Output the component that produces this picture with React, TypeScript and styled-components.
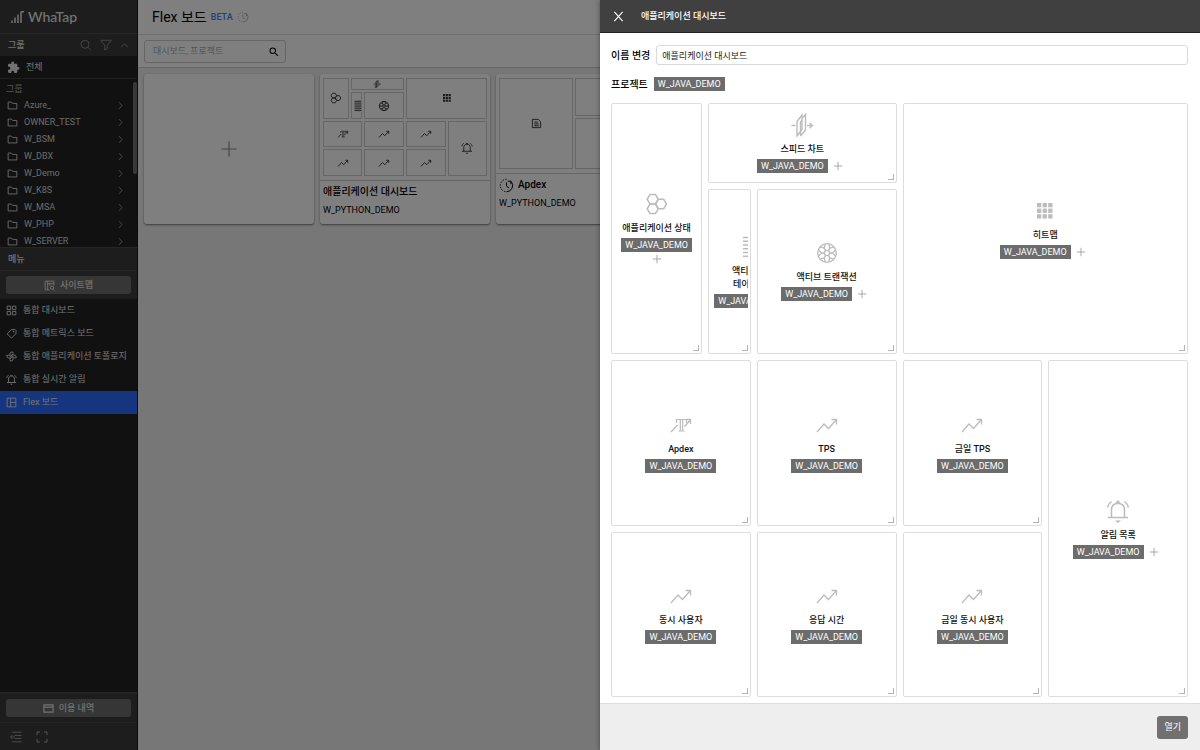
import React from "react";
import styled, { createGlobalStyle, css } from "styled-components";
import { MdExtension, MdSearch } from "react-icons/md";

const GlobalStyle = createGlobalStyle`
  *, *::before, *::after { box-sizing: border-box; }
  body {
    margin: 0;
    font-family: Roboto, "Noto Sans CJK KR", sans-serif;
    font-size: 9px;
    line-height: 13px;
    color: #000;
  }
  button, input { font: inherit; color: inherit; margin: 0; }
  button { cursor: pointer; border: 0; padding: 0; background: none; }
  h1, h2, h3, p, ul { margin: 0; padding: 0; font-size: inherit; font-weight: inherit; }
  ul { list-style: none; }
  a { color: inherit; text-decoration: none; }
  svg { display: block; flex: none; }
`;

/* ---------- icons ---------- */

type IconProps = { size?: number; width?: number };

const Line = styled.svg.attrs({ fill: "none", stroke: "currentColor", "aria-hidden": true })``;

const icon =
  (body: React.ReactNode, stroke = 1.5) =>
  ({ size = 24, width = stroke }: IconProps) => (
    <Line width={size} height={size} viewBox="0 0 24 24" strokeWidth={width}>
      {body}
    </Line>
  );

const TrendIcon = icon(<path d="M2 19 9 11l4.500 4.500L21 7M16.500 6.500H21.500V11.500" />, 1.3);
const ApdexIcon = icon(
  <>
    <path d="M2 19 8.500 12M15.500 13.500 21 7.500M17.500 6.500H21.500V11" />
    <path d="M7.500 10V6.500h10V10M11.300 6.500v11.500M13.700 6.500v11.500M9.500 18h6" strokeWidth={1.2} />
  </>,
  1.3,
);
const HexIcon = icon(
  <>
    <path d="M5 2.500h5.500L13.300 7.300 10.500 12H5L2.200 7.300z" />
    <path d="M5 12h5.500l2.800 4.800-2.800 4.700H5l-2.800-4.700z" />
    <path d="M13.300 7.300h5.400L21.500 12l-2.800 4.800h-5.400L10.500 12z" />
  </>,
);
const SpeedIcon = icon(
  <>
    <path d="M7 8.500 12 2v14.500L7 23z" />
    <path d="M10.500 22.500V9L12 7M10.500 23 15.500 17V1.500L12.500 5" />
    <path d="M1.500 12.500h4M17 12.500h4.500" />
    <path d="m19.500 9.800 2.800 2.700-2.800 2.700" />
  </>,
  1.4,
);
const TableIcon = icon(<path d="M5 2.500h14M5 6.200h14M5 10h14M5 13.800h14M5 17.500h14M5 21.200h14" />, 1.4);
const WheelIcon = icon(
  <>
    <circle cx="12" cy="12" r="9.300" />
    <circle cx="12" cy="12" r="2.600" />
    <path d="M9.400 12H6.500M14.600 12h2.900M10.700 9.700 9.200 7.200M13.300 9.700l1.500-2.500M10.700 14.300l-1.500 2.500M13.300 14.300l1.500 2.500" />
    <path d="M3.500 9 6.500 12l-3 3M20.500 9l-3 3 3 3M5.200 6l4 1.200 1-4.200M18.800 6l-4 1.200-1-4.200M5.200 18l4-1.200 1 4.200M18.800 18l-4-1.200-1 4.200" />
  </>,
  1.3,
);
const BellIcon = icon(
  <>
    <path d="M5.500 18.500V11c0-4 2.500-6.500 6.500-6.500s6.500 2.500 6.500 6.500v7.500M2 18.500h20M10 4.200 12 2l2 2.200M1.500 8.500C2 6 3.500 4 5.500 2.500M22.500 8.500C22 6 20.500 4 18.500 2.500" />
    <path d="M9 21.500h6L12 24z" fill="currentColor" stroke="none" />
  </>,
);
const HeatIcon = icon(
  <g fill="currentColor" stroke="none">
    {[4, 9.600, 15.200].map((y) =>
      [4, 9.600, 15.200].map((x) => <rect key={`${x}-${y}`} x={x} y={y} width="4.300" height="4.300" />),
    )}
  </g>,
);
const DocIcon = icon(<path d="M3 3h13l5 5v13H3zM7 9h8M7 13h10M7 17h10" />, 2);
const FolderIcon = icon(<path d="M2.500 4.500h7l2.500 3h9.500v12h-19z" />, 2);
const ChevronIcon = icon(<path d="m8 3 8 9-8 9" />, 1.6);
const UpIcon = icon(<path d="m3 16 9-8 9 8" />, 2);
const LensIcon = icon(<path d="M18 10.500a8 8 0 1 1-16 0 8 8 0 0 1 16 0zM16 16.500l6 6" />, 1.5);
const FunnelIcon = icon(<path d="M1.500 2.500h21l-8 10.500v6l-5 3v-9z" />, 1.5);
const PlusIcon = icon(<path d="M12 2v20M2 12h20" />);
const CloseIcon = icon(<path d="m3 2 18 20M21 2 3 22" />, 2.4);
const GridIcon = icon(<path d="M2.500 2.500H10V10H2.500zM14 2.500h7.500V10H14zM2.500 14H10v7.500H2.500zM14 14h7.500v7.500H14z" />, 2);
const TagIcon = icon(
  <>
    <path d="m2.500 13 9-9.500 8-.5 2.500 2.500-.5 7-9.500 9.500z" />
    <circle cx="16.500" cy="8" r="1" />
  </>,
  2,
);
const TopologyIcon = icon(
  <>
    <circle cx="12" cy="12" r="2" />
    <path d="M12 10 8 7.500 10 3l4.500-1 1 4zM14 12l2.500-4 4.500 2 1.500 4.500-4.500.5zM12 14l4 2.500L14 21l-4.500 1-1-4zM10 12l-2.500 4L3 14 1.500 9.500 6 9z" />
  </>,
  2,
);
const BoardIcon = icon(<path d="M2.500 2.500h19v19h-19zM10 2.500v19M10 12h11.500" />, 2);
const SitemapIcon = icon(
  <path d="M12 21.500H2.500v-19h19V12M8 2.500v19M8 8h13.500M13 8v5M21 17a3.500 3.500 0 1 1-7 0 3.500 3.500 0 0 1 7 0zM20 20l3 3" />,
  2,
);
const CardIcon = icon(<path d="M2 4h20v16H2zM2 9h20" />, 2.6);
const CollapseIcon = icon(<path d="M4 2.500h19M9 9h14M4 21.500h19M9 15h14M1 12h9M5 8l-4 4 4 4" />, 1.6);
const ExpandIcon = icon(<path d="M2 8V2h6M16 2h6v6M22 16v6h-6M8 22H2v-6" />, 2);
const ClockIcon = icon(
  <>
    <path d="M12 2a10 10 0 0 0 0 20" strokeDasharray="2.200 2.200" />
    <path d="M12 22a10 10 0 0 0 7.500-16.500M19 10V5h-5M12 7v6l4 3" />
  </>,
  1.6,
);

const LogoMark = () => (
  <svg width="13" height="12" viewBox="0 0 13 12" fill="none" stroke="currentColor" strokeWidth="1.500" aria-hidden>
    <path d="M1 9.500V12M4 6.500V12M7 3.500V12M10 12V1.500q0-.8.8-.8H13" />
  </svg>
);

/* ---------- shell ---------- */

const Shell = styled.div`
  position: relative;
  display: flex;
  height: 100vh;
  overflow: hidden;
`;

/* ---------- sidebar ---------- */

const Sidebar = styled.aside`
  flex: none;
  display: flex;
  flex-direction: column;
  width: 138px;
  background: #222;
  color: #e4e4e4;
  border-right: 1px solid #161616;
`;

const Brand = styled.a`
  display: flex;
  align-items: center;
  gap: 4px;
  height: 34px;
  padding-left: 11px;
  background: #3a3a3a;
  color: #e8e8e8;
  border-bottom: 1px solid #4a4a4a;
  font-family: Lato, sans-serif;
  font-size: 14px;
  font-weight: 500;
`;

const SectionHead = styled.div`
  display: flex;
  align-items: center;
  justify-content: space-between;
  height: 22px;
  padding: 0 8px;
  background: #3a3a3a;
  font-weight: 500;
`;

const HeadTools = styled.div`
  display: flex;
  align-items: center;
  gap: 8px;
  color: #a0a0a0;
`;

const AllRow = styled.a`
  display: flex;
  align-items: center;
  gap: 6px;
  height: 23px;
  padding-left: 7px;
  border-bottom: 1px solid #3c3c3c;
`;

const GroupArea = styled.div`
  position: relative;
  height: 168px;
  overflow: hidden;
`;

const GroupCaption = styled.p`
  height: 18px;
  padding: 4px 6px;
  color: #a8a8a8;
`;

const GroupLink = styled.a`
  display: flex;
  align-items: center;
  gap: 6px;
  height: 17px;
  padding: 0 12px 0 7px;
  color: #d8d8d8;

  span { flex: 1; }
`;

const ScrollThumb = styled.div`
  position: absolute;
  top: 3px;
  right: 0;
  width: 4px;
  height: 92px;
  border-radius: 2px;
  background: #707070;
`;

const MenuBlock = styled.div`
  background: #3a3a3a;
  border-top: 1px solid #4a4a4a;
`;

const ButtonBar = styled.div`
  padding: 5px 6px;
  border-top: 1px solid #484848;
`;

const WideButton = styled.button`
  display: flex;
  align-items: center;
  justify-content: center;
  gap: 5px;
  width: 100%;
  height: 18px;
  border-radius: 3px;
  background: #6c6c6c;
  font-weight: 500;
`;

const MenuLink = styled.a<{ $active?: boolean }>`
  display: flex;
  align-items: center;
  gap: 6px;
  height: 23px;
  padding-left: 6px;
  background: ${(p) => (p.$active ? "#2b6cff" : "none")};
`;

const SideFoot = styled.div`
  margin-top: auto;
  background: #3a3a3a;
  border-top: 1px solid #4a4a4a;
`;

const FootTools = styled.div`
  display: flex;
  align-items: center;
  gap: 14px;
  height: 28px;
  padding-left: 10px;
  border-top: 1px solid #484848;
  color: #a8a8a8;
`;

/* ---------- board list ---------- */

const Main = styled.main`
  flex: 1;
  min-width: 0;
  display: flex;
  flex-direction: column;
  background: #eee;
`;

const TitleBar = styled.header`
  display: flex;
  align-items: center;
  gap: 4px;
  height: 35px;
  padding-left: 14px;
  background: #fff;
  border-bottom: 1px solid #ddd;
`;

const PageTitle = styled.h1`
  font-size: 14px;
  line-height: 20px;
`;

const Beta = styled.span`
  font-weight: 500;
  color: #4a7dfc;
`;

const Muted = styled.span`
  color: #aaa;
`;

const Toolbar = styled.div`
  height: 33px;
  padding: 5px 6px;
  background: #fff;
  border-bottom: 1px solid #ccc;
`;

const SearchBox = styled.label`
  display: flex;
  align-items: center;
  width: 142px;
  height: 23px;
  padding: 0 5px 0 8px;
  border: 1px solid #ccc;
  border-radius: 3px;

  input {
    flex: 1;
    min-width: 0;
    padding: 0;
    border: 0;
    outline: 0;
    background: none;
  }
  input::placeholder { color: #aaa; }
`;

const Cards = styled.div`
  display: flex;
  flex-wrap: wrap;
  gap: 6px;
  padding: 6px;
`;

const cardFace = css`
  width: 170px;
  height: 150px;
  background: #fff;
  border-radius: 3px;
  box-shadow: 0 1px 2px rgba(0, 0, 0, 0.5);
`;

const AddCard = styled.button`
  ${cardFace}
  display: grid;
  place-items: center;
  color: #888;
`;

const Card = styled.article`
  ${cardFace}
`;

const Preview = styled.div<{ $height: number }>`
  display: grid;
  grid-template-columns: repeat(24, minmax(0, 1fr));
  grid-template-rows: repeat(7, minmax(0, 1fr));
  gap: 2px;
  height: ${(p) => p.$height}px;
  padding: 4px 3px;
  border-bottom: 1px solid #ccc;
`;

const placed = css<{ $area: string }>`
  grid-area: ${(p) => p.$area};
`;

const MiniTile = styled.div<{ $area: string }>`
  ${placed}
  display: grid;
  place-items: center;
  overflow: hidden;
  border: 1px solid #ccc;
  color: #333;
`;

const CardTitle = styled.h2`
  display: flex;
  align-items: center;
  gap: 4px;
  padding: 3px 3px 0;
  font-size: 10px;
  line-height: 16px;
  font-weight: 500;
`;

const CardText = styled.p`
  padding: 4px 3px 0;
`;

/* ---------- drawer ---------- */

const Backdrop = styled.div`
  position: absolute;
  inset: 0;
  background: rgba(0, 0, 0, 0.5);
`;

const Drawer = styled.section`
  position: absolute;
  inset: 0 0 0 auto;
  display: flex;
  flex-direction: column;
  width: 50%;
  background: #fff;
  box-shadow: -1px 0 4px rgba(0, 0, 0, 0.3);
`;

const DrawerHead = styled.header`
  display: flex;
  align-items: center;
  gap: 17px;
  height: 33px;
  padding-left: 13px;
  background: #404040;
  border-bottom: 1px solid #222;
  color: #fff;
  font-weight: 500;
`;

const DrawerBody = styled.div`
  flex: 1;
  min-height: 0;
  display: flex;
  flex-direction: column;
  gap: 12px;
  padding: 12px 12px 6px 11px;
`;

const Field = styled.div`
  display: flex;
  align-items: center;
  gap: 6px;
  font-size: 10px;
  font-weight: 500;
`;

const NameInput = styled.input`
  flex: 1;
  min-width: 0;
  height: 20px;
  padding: 0 5px;
  border: 1px solid #d9d9d9;
  border-radius: 3px;
  font-size: 9px;
  font-weight: 400;
  color: #222;
`;

const Tag = styled.span`
  height: 14px;
  padding: 0 4px;
  background: #6c6c6c;
  color: #fff;
  font-size: 9px;
  line-height: 14px;
  font-weight: 400;
  white-space: nowrap;
`;

const Board = styled.div`
  flex: 1;
  min-height: 0;
  display: grid;
  grid-template-columns: repeat(24, minmax(0, 1fr));
  grid-template-rows: repeat(7, minmax(0, 1fr));
  gap: 6px;
`;

const Tile = styled.article<{ $area: string }>`
  ${placed}
  position: relative;
  padding: 0 2px;
  border: 1px solid #ddd;
  border-radius: 2px;

  &::after {
    content: "";
    position: absolute;
    right: 2px;
    bottom: 2px;
    width: 6px;
    height: 6px;
    border: solid #b4b4b4;
    border-width: 0 1px 1px 0;
  }
`;

const TileClip = styled.div`
  display: flex;
  height: 100%;
  padding: 0 3px;
  overflow: hidden;
`;

const TileContent = styled.div`
  display: flex;
  flex-direction: column;
  align-items: center;
  margin: auto;
  color: #bcbcbc;
`;

const TileTitle = styled.h3`
  padding: 6px 0 3px;
  color: #111;
  font-weight: 500;
  text-align: center;
  white-space: pre;
`;

const TagRow = styled.div`
  display: flex;
  flex-wrap: wrap;
  justify-content: center;
`;

const AddButton = styled.button`
  display: grid;
  place-items: center;
  width: 20px;
  height: 14px;
  color: #999;
`;

const DrawerFoot = styled.footer`
  display: flex;
  align-items: center;
  justify-content: flex-end;
  height: 47px;
  padding-right: 12px;
  background: #eee;
  border-top: 1px solid #ddd;
`;

const OpenButton = styled.button`
  height: 23px;
  padding: 0 7px;
  border-radius: 3px;
  background: #707070;
  color: #fff;
`;

/* ---------- data ---------- */

const groups = ["Azure_", "OWNER_TEST", "W_BSM", "W_DBX", "W_Demo", "W_K8S", "W_MSA", "W_PHP", "W_SERVER"];

const menus = [
  { label: "통합 대시보드", Icon: GridIcon },
  { label: "통합 메트릭스 보드", Icon: TagIcon },
  { label: "통합 애플리케이션 토폴로지", Icon: TopologyIcon },
  { label: "통합 실시간 알림", Icon: BellIcon },
  { label: "Flex 보드", Icon: BoardIcon, active: true },
];

const widgets = [
  { title: "애플리케이션 상태", Icon: HexIcon, area: "1 / 1 / 4 / 5", add: true },
  { title: "스피드 차트", Icon: SpeedIcon, area: "1 / 5 / 2 / 13", add: true },
  { title: "액티브 스\n테이터스", Icon: TableIcon, area: "2 / 5 / 4 / 7" },
  { title: "액티브 트랜잭션", Icon: WheelIcon, area: "2 / 7 / 4 / 13", add: true },
  { title: "히트맵", Icon: HeatIcon, area: "1 / 13 / 4 / 25", add: true },
  { title: "Apdex", Icon: ApdexIcon, area: "4 / 1 / 6 / 7" },
  { title: "TPS", Icon: TrendIcon, area: "4 / 7 / 6 / 13" },
  { title: "금일 TPS", Icon: TrendIcon, area: "4 / 13 / 6 / 19" },
  { title: "알림 목록", Icon: BellIcon, area: "4 / 19 / 8 / 25", add: true },
  { title: "동시 사용자", Icon: TrendIcon, area: "6 / 1 / 8 / 7" },
  { title: "응답 시간", Icon: TrendIcon, area: "6 / 7 / 8 / 13" },
  { title: "금일 동시 사용자", Icon: TrendIcon, area: "6 / 13 / 8 / 19" },
];

export default function App() {
  return (
    <Shell>
      <GlobalStyle />
      <Sidebar>
        <Brand href="#">
          <LogoMark />
          WhaTap
        </Brand>
        <SectionHead>
          그룹
          <HeadTools>
            <button aria-label="검색"><LensIcon size={12} /></button>
            <button aria-label="필터"><FunnelIcon size={12} /></button>
            <button aria-label="접기"><UpIcon size={9} /></button>
          </HeadTools>
        </SectionHead>
        <AllRow href="#">
          <MdExtension size={13} />
          전체
        </AllRow>
        <GroupArea>
          <GroupCaption>그룹</GroupCaption>
          <ul>
            {groups.map((name) => (
              <li key={name}>
                <GroupLink href="#">
                  <FolderIcon size={11} />
                  <span>{name}</span>
                  <ChevronIcon size={9} />
                </GroupLink>
              </li>
            ))}
          </ul>
          <ScrollThumb />
        </GroupArea>
        <MenuBlock>
          <SectionHead>메뉴</SectionHead>
          <ButtonBar>
            <WideButton>
              <SitemapIcon size={11} />
              사이트맵
            </WideButton>
          </ButtonBar>
        </MenuBlock>
        <nav>
          {menus.map(({ label, Icon, active }) => (
            <MenuLink key={label} href="#" $active={active}>
              <Icon size={11} width={2} />
              {label}
            </MenuLink>
          ))}
        </nav>
        <SideFoot>
          <ButtonBar>
            <WideButton>
              <CardIcon size={11} />
              이용 내역
            </WideButton>
          </ButtonBar>
          <FootTools>
            <button aria-label="사이드바 접기"><CollapseIcon size={12} /></button>
            <button aria-label="전체 화면"><ExpandIcon size={12} /></button>
          </FootTools>
        </SideFoot>
      </Sidebar>

      <Main>
        <TitleBar>
          <PageTitle>Flex 보드</PageTitle>
          <Beta>BETA</Beta>
          <Muted><ClockIcon size={12} /></Muted>
        </TitleBar>
        <Toolbar>
          <SearchBox>
            <input aria-label="대시보드 검색" placeholder="대시보드, 프로젝트" />
            <MdSearch size={12} />
          </SearchBox>
        </Toolbar>
        <Cards>
          <AddCard aria-label="보드 추가"><PlusIcon size={18} /></AddCard>
          <Card>
            <Preview $height={107}>
              {widgets.map(({ title, Icon, area }) => (
                <MiniTile key={title} $area={area}>
                  <Icon size={area.startsWith("1 / 5") ? 8 : 12} width={1.8} />
                </MiniTile>
              ))}
            </Preview>
            <CardTitle>애플리케이션 대시보드</CardTitle>
            <CardText>W_PYTHON_DEMO</CardText>
          </Card>
          <Card>
            <Preview $height={100}>
              <MiniTile $area="1 / 1 / 8 / 12"><DocIcon size={11} /></MiniTile>
              <MiniTile $area="1 / 12 / 4 / 25" />
              <MiniTile $area="4 / 12 / 8 / 25" />
            </Preview>
            <CardTitle>
              <ClockIcon size={15} />
              Apdex
            </CardTitle>
            <CardText>W_PYTHON_DEMO</CardText>
          </Card>
        </Cards>
      </Main>

      <Backdrop />
      <Drawer role="dialog" aria-labelledby="drawer-title">
        <DrawerHead>
          <button aria-label="닫기"><CloseIcon size={11} /></button>
          <h2 id="drawer-title">애플리케이션 대시보드</h2>
        </DrawerHead>
        <DrawerBody>
          <Field>
            <label htmlFor="board-name">이름 변경</label>
            <NameInput id="board-name" defaultValue="애플리케이션 대시보드" />
          </Field>
          <Field>
            <span>프로젝트</span>
            <Tag>W_JAVA_DEMO</Tag>
          </Field>
          <Board>
            {widgets.map(({ title, Icon, area, add }) => (
              <Tile key={title} $area={area}>
                <TileClip>
                  <TileContent>
                    <Icon />
                    <TileTitle>{title}</TileTitle>
                    <TagRow>
                      <Tag>W_JAVA_DEMO</Tag>
                      {add && (
                        <AddButton aria-label="프로젝트 추가"><PlusIcon size={10} width={2} /></AddButton>
                      )}
                    </TagRow>
                  </TileContent>
                </TileClip>
              </Tile>
            ))}
          </Board>
        </DrawerBody>
        <DrawerFoot>
          <OpenButton>열기</OpenButton>
        </DrawerFoot>
      </Drawer>
    </Shell>
  );
}
